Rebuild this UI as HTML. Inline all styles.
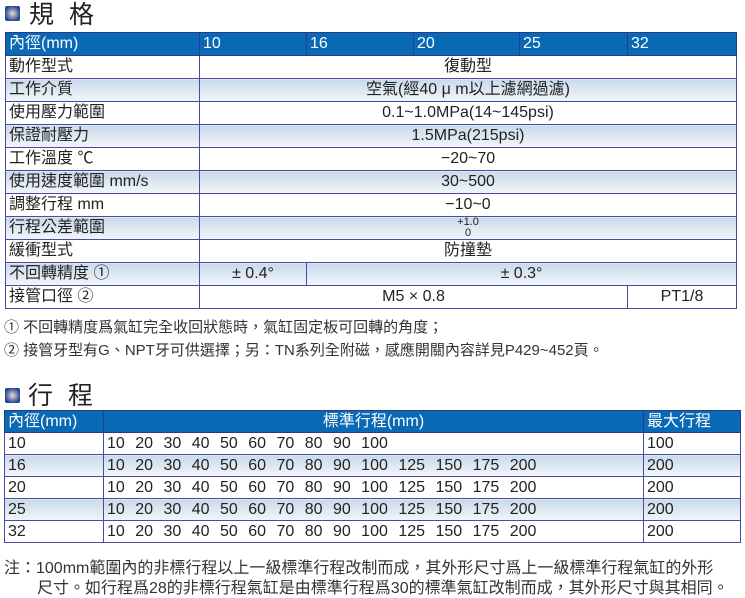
<!DOCTYPE html>
<html><head><meta charset="utf-8"><style>
*{margin:0;padding:0;box-sizing:border-box}
body{width:745px;height:597px;background:#fff;position:relative;overflow:hidden;font-family:"Liberation Sans","Noto Sans CJK TC",sans-serif;color:#222}
.t{position:absolute;font-size:25px;line-height:28px;color:#222;letter-spacing:4px}
.ic{position:absolute;width:15px;height:15px;background:radial-gradient(circle,#dde 0,#88a 40%,#224f9a 70%,#1a3a88 100%);border-radius:2px}
table{position:absolute;border-collapse:collapse;table-layout:fixed}
td{border:1px solid #4a4aa0;font-size:16px;height:23px;padding:0 3px;white-space:nowrap;line-height:1;overflow:hidden}
tr.h td{background:#0a69b5;color:#fff;font-size:16px;border-color:#2a3a8a}
tr.s td{background:linear-gradient(#c9daea,#f2f6fa)}
.c{text-align:center}
.n{position:absolute;font-size:15px;color:#333;white-space:nowrap}
.t2 td{height:22px;font-size:16px;word-spacing:6px}
</style></head><body>
<div class="ic" style="left:5px;top:6px"></div>
<div class="t" style="left:29px;top:1px">規&nbsp;格</div>
<table style="left:5px;top:32px;width:731px">
<colgroup><col style="width:194px"><col style="width:107px"><col style="width:107px"><col style="width:106px"><col style="width:108px"><col style="width:109px"></colgroup>
<tr class="h"><td>內徑(mm)</td><td>10</td><td>16</td><td>20</td><td>25</td><td>32</td></tr>
<tr><td>動作型式</td><td colspan="5" class="c">復動型</td></tr>
<tr class="s"><td>工作介質</td><td colspan="5" class="c">空氣(經40 μ m以上濾網過濾)</td></tr>
<tr><td>使用壓力範圍</td><td colspan="5" class="c">0.1~1.0MPa(14~145psi)</td></tr>
<tr class="s"><td>保證耐壓力</td><td colspan="5" class="c">1.5MPa(215psi)</td></tr>
<tr><td>工作溫度 ℃</td><td colspan="5" class="c">−20~70</td></tr>
<tr class="s"><td>使用速度範圍 mm/s</td><td colspan="5" class="c">30~500</td></tr>
<tr><td>調整行程 mm</td><td colspan="5" class="c">−10~0</td></tr>
<tr class="s"><td>行程公差範圍</td><td colspan="5" class="c" style="font-size:11px;line-height:11px">+1.0<br>0</td></tr>
<tr><td>緩衝型式</td><td colspan="5" class="c">防撞墊</td></tr>
<tr class="s"><td>不回轉精度 ①</td><td class="c">± 0.4°</td><td colspan="4" class="c">± 0.3°</td></tr>
<tr><td>接管口徑 ②</td><td colspan="4" class="c">M5 × 0.8</td><td class="c">PT1/8</td></tr>
</table>
<div class="n" style="left:4px;top:316px">① 不回轉精度爲氣缸完全收回狀態時，氣缸固定板可回轉的角度；</div>
<div class="n" style="left:4px;top:339px">② 接管牙型有G、NPT牙可供選擇；另：TN系列全附磁，感應開關內容詳見P429~452頁。</div>
<div class="ic" style="left:5px;top:388px"></div>
<div class="t" style="left:28px;top:382px">行&nbsp;程</div>
<table class="t2" style="left:4px;top:410px;width:736px">
<colgroup><col style="width:99px"><col style="width:540px"><col style="width:97px"></colgroup>
<tr class="h"><td>內徑(mm)</td><td class="c">標準行程(mm)</td><td>最大行程</td></tr>
<tr><td>10</td><td>10 20 30 40 50 60 70 80 90 100</td><td>100</td></tr>
<tr class="s"><td>16</td><td>10 20 30 40 50 60 70 80 90 100 125 150 175 200</td><td>200</td></tr>
<tr><td>20</td><td>10 20 30 40 50 60 70 80 90 100 125 150 175 200</td><td>200</td></tr>
<tr class="s"><td>25</td><td>10 20 30 40 50 60 70 80 90 100 125 150 175 200</td><td>200</td></tr>
<tr><td>32</td><td>10 20 30 40 50 60 70 80 90 100 125 150 175 200</td><td>200</td></tr>
</table>
<div class="n" style="left:4px;top:554px;font-size:16px">注：100mm範圍內的非標行程以上一級標準行程改制而成，其外形尺寸爲上一級標準行程氣缸的外形</div>
<div class="n" style="left:37px;top:574px;font-size:16px">尺寸。如行程爲28的非標行程氣缸是由標準行程爲30的標準氣缸改制而成，其外形尺寸與其相同。</div>
</body></html>
